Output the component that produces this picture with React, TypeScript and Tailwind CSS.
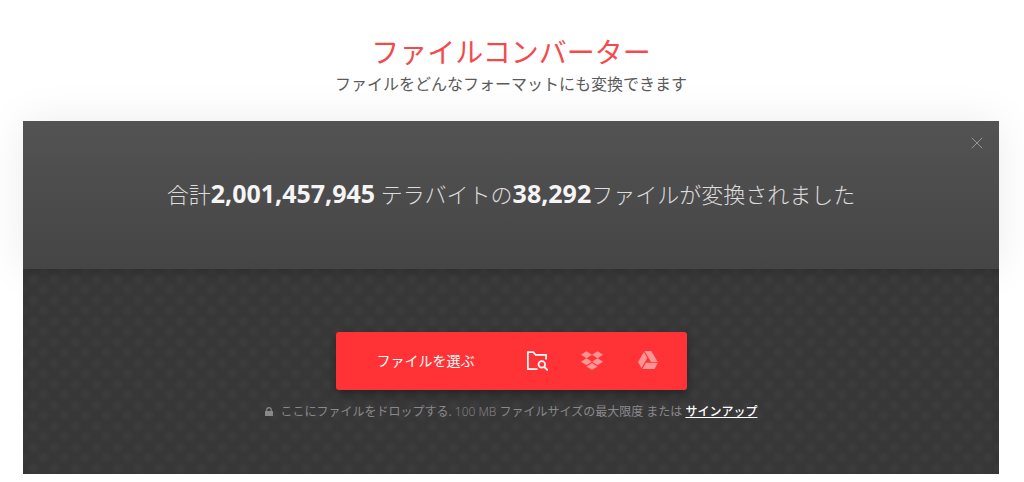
import React from 'react'
import { X } from 'lucide-react'

function FolderSearchIcon() {
  return (
    <svg viewBox="0 0 24 24" className="h-6 w-6" fill="none" stroke="currentColor" strokeWidth="1.7">
      <path d="M13.5 20.2H3.9V3.2h5.4l2.3 2.6h10.5v4.6" />
      <circle cx="17.8" cy="15.4" r="3.3" />
      <path d="M20.2 17.8l3.6 3.6" strokeWidth="2" />
    </svg>
  )
}

function DropboxIcon() {
  return (
    <svg viewBox="0 0 24 24" className="h-6 w-6" fill="currentColor">
      <path d="M6.500 2.300l5.500 3.500-5.500 3.500L1 5.800z" />
      <path d="M17.500 2.300l5.500 3.500-5.500 3.500L12 5.800z" />
      <path d="M6.500 9.300l5.500 3.500-5.500 3.500L1 12.800z" />
      <path d="M17.500 9.300l5.500 3.500-5.500 3.500L12 12.800z" />
      <path d="M12 14l5.500 3.500L12 21l-5.500-3.500z" />
    </svg>
  )
}

function DriveIcon() {
  return (
    <svg viewBox="0 0 24 24" className="h-6 w-6" fill="currentColor">
      <path d="M8.500 2h6.800l6.500 11h-6.700z" />
      <path d="M7.900 3l3.400 5.900-5.800 10L2 13z" />
      <path d="M9.900 13.800h12L18.500 20H6.400z" />
    </svg>
  )
}

function LockIcon() {
  return (
    <svg viewBox="0 0 8 10" className="h-2.5 w-2" fill="currentColor" aria-hidden="true">
      <path d="M0 4h8v5H0z" />
      <path d="M1.800 4.500V2.800a2.200 2.200 0 0 1 4.400 0v1.700" fill="none" stroke="currentColor" strokeWidth="1.200" />
    </svg>
  )
}

function Stats() {
  return (
    <section className="relative flex h-37 items-center justify-center bg-linear-to-b from-[#545354] to-[#464546] shadow-[0_0_40px_rgba(30,20,40,0.08)]">
      <p className="pb-1 text-center text-[22px] leading-8 font-light text-[#dddcdd]">
        合計<b className="text-[25px] font-bold text-[#f5f5f5]">2,001,457,945</b> テラバイトの
        <b className="text-[25px] font-bold text-[#f5f5f5]">38,292</b>ファイルが変換されました
      </p>
      <button type="button" aria-label="閉じる" className="absolute top-3 right-3 text-[#a5a4a5]">
        <X size={20} strokeWidth={1} />
      </button>
    </section>
  )
}

function FilePicker() {
  return (
    <div className="flex h-[58px] w-full max-w-[351px] items-center rounded-[3px] bg-[#ff3336] pr-[27px] pl-[41px] text-white shadow-[0_4px_10px_rgba(0,0,0,0.35)]">
      <button type="button" className="flex-1 text-left text-sm">
        ファイルを選ぶ
      </button>
      <div className="flex items-center gap-8">
        <button type="button" aria-label="ファイル">
          <FolderSearchIcon />
        </button>
        <button type="button" aria-label="Dropbox" className="text-[#ff9495]">
          <DropboxIcon />
        </button>
        <button type="button" aria-label="Google Drive" className="text-[#ff9495]">
          <DriveIcon />
        </button>
      </div>
    </div>
  )
}

export default function App() {
  return (
    <main className="bg-white pt-9 pr-[25px] pb-2 pl-[23px] font-['Open_Sans','Noto_Sans_CJK_JP',sans-serif]">
      <header className="text-center">
        <h1 className="text-[28px] leading-8 text-[#f54a4c]">ファイルコンバーター</h1>
        <p className="text-base leading-8 text-[#5a5a5a]">ファイルをどんなフォーマットにも変換できます</p>
      </header>

      <div className="mt-[21px]">
        <Stats />
        <section className="relative flex flex-col items-center bg-[#383738] bg-[radial-gradient(circle,#3e3d3e_0%,transparent_45%),radial-gradient(circle,#3e3d3e_0%,transparent_45%)] bg-size-[21px_21px] bg-position-[0_0,10px_10px] pt-[63px] pb-[52px] shadow-[inset_0_6px_12px_-4px_rgba(0,0,0,0.2)]">
          <FilePicker />
          <p className="mt-3 flex items-center gap-2 text-xs leading-5 text-[#8a898a]">
            <LockIcon />
            <span>
              ここにファイルをドロップする. <span className="font-light">100 MB</span> ファイルサイズの最大限度 または{' '}
              <a href="#signup" className="font-medium text-white underline">
                サインアップ
              </a>
            </span>
          </p>
        </section>
      </div>
    </main>
  )
}
